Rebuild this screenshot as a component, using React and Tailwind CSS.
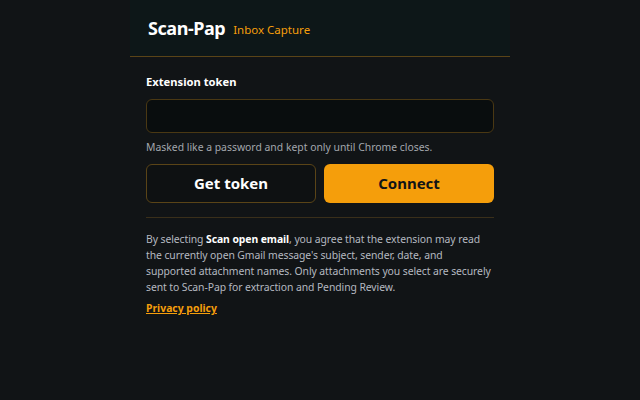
import React from "react";

const font = { fontFamily: '"Noto Sans", "Open Sans", sans-serif' };

export default function App() {
  return (
    <div
      className="min-h-[400px] w-[640px] bg-[#111416] flex justify-center"
      style={font}
    >
      <div className="w-[380px] flex flex-col">
        {/* Header */}
        <header className="h-[57px] bg-[#0d1718] border-b border-[#5a4417] flex items-center gap-2 px-[18px]">
          <h1 className="text-[18px] font-bold text-white tracking-tight">Scan-Pap</h1>
          <span className="text-[11.5px] text-[#f59e0b] mt-[3px]">Inbox Capture</span>
        </header>

        <main className="px-4 pt-[17px] flex flex-col">
          <label className="text-[11.2px] font-bold text-white leading-4">
            Extension token
          </label>
          <input
            type="password"
            className="mt-[9px] h-[34px] w-full rounded-md border border-[#4a3813] bg-[#090d0e] px-3 text-white outline-none"
          />
          <p className="mt-[6px] text-[10.4px] text-[#a3a7ad] leading-4">
            Masked like a password and kept only until Chrome closes.
          </p>

          <div className="mt-[9px] grid grid-cols-2 gap-2">
            <button className="h-[39px] rounded-md border border-[#5a4417] bg-[#0e1112] text-[15px] font-bold text-white">
              Get token
            </button>
            <button className="h-[39px] rounded-md bg-[#f59e0b] text-[15px] font-bold text-[#111416]">
              Connect
            </button>
          </div>

          <div className="mt-[14px] border-t border-[#3a2f1a]" />

          <p className="mt-[13px] text-[10.4px] leading-4 text-[#b5b9c0] tracking-[-0.08px] whitespace-nowrap">
            By selecting <strong className="font-bold text-white">Scan open email</strong>, you
            agree that the extension may read
            <br />
            the currently open Gmail message's subject, sender, date, and
            <br />
            supported attachment names. Only attachments you select are securely
            <br />
            sent to Scan-Pap for extraction and Pending Review.
          </p>

          <a
            href="#"
            className="mt-[6px] self-start text-[10.4px] font-bold text-[#f59e0b] underline"
          >
            Privacy policy
          </a>
        </main>
      </div>
    </div>
  );
}
